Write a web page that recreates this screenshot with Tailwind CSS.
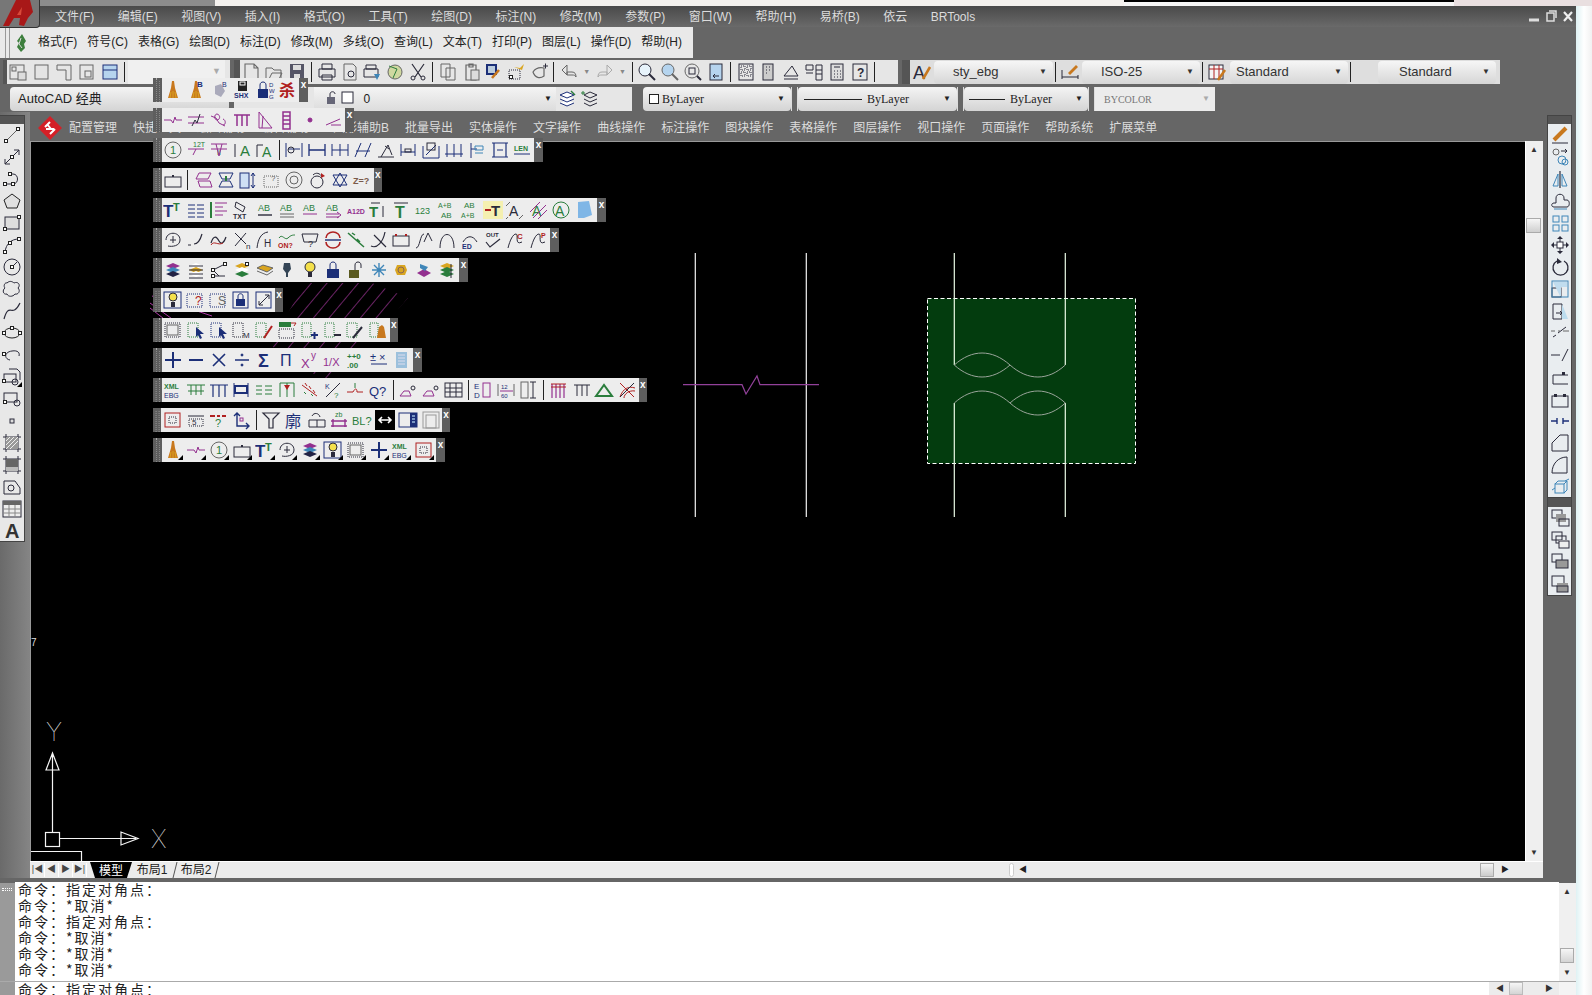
<!DOCTYPE html>
<html lang="zh">
<head>
    <meta charset="UTF-8">
    <title>AutoCAD 经典</title>
    <script src="https://cdn.jsdelivr.net/npm/@tailwindcss/browser@4"></script>
</head>
<body class="bg-white overflow-hidden">
<div class="relative w-[1592px] h-[995px] overflow-hidden flex flex-col font-['Liberation_Sans','Noto_Sans_CJK_SC',sans-serif] text-[12px]">

    <!-- Desktop strip above the window -->
    <div class="flex h-[6px] shrink-0">
        <div class="w-[215px] bg-[#8c8c8c]"></div>
        <div class="w-[909px] bg-[#f4f1ee]"></div>
        <div class="w-[330px] bg-[#f6f6f6] border-t-2 border-black"></div>
        <div class="flex-1 bg-[#e9dfe0]"></div>
    </div>

    <div class="flex flex-1 min-h-0">
        <div class="w-[1576px] flex flex-col bg-[#666666]">

            <!-- Menu bar -->
            <div class="flex items-center h-[21px] shrink-0 pl-[55px] gap-[23.5px] bg-linear-to-b from-[#4a4a4a] to-[#6a6a6a] text-[#dcdcdc] text-[12px] whitespace-nowrap relative">
                <span>文件(F)</span><span>编辑(E)</span><span>视图(V)</span><span>插入(I)</span><span>格式(O)</span><span>工具(T)</span><span>绘图(D)</span><span>标注(N)</span><span>修改(M)</span><span>参数(P)</span><span>窗口(W)</span><span>帮助(H)</span><span>易桥(B)</span><span>依云</span><span>BRTools</span>
                <div class="absolute right-[2px] top-[3px] flex items-center gap-[5px]">
                    <svg width="12" height="14" viewBox="0 0 12 14"><path d="M1 11h10" stroke="#ddd" stroke-width="3"/></svg>
                    <svg width="12" height="14" viewBox="0 0 12 14"><path d="M2 4h7v8H2zM4 2h7v7" fill="none" stroke="#ddd" stroke-width="1.5"/></svg>
                    <svg width="12" height="14" viewBox="0 0 12 14"><path d="M2 3l8 9M10 3l-8 9" stroke="#eee" stroke-width="2.2"/></svg>
                </div>
            </div>

            <!-- Custom menu toolbar -->
            <div class="flex items-center h-[31px] w-[693px] shrink-0 bg-[#e9e9e9] text-[#222] text-[12px] whitespace-nowrap">
                <div class="w-[5px] h-full ml-[5px] shrink-0 border-x border-[#999]"></div>
                <svg class="ml-[4px] mr-[10px] shrink-0" width="14" height="20" viewBox="0 0 14 20"><path d="M8 1L3 8l2 2-2 4 4 5 4-4-1-4 2-3z" fill="#3d7f3d"/><path d="M7 5l-2 6 3 4" stroke="#ddd" fill="none"/></svg>
                <div class="flex gap-[10px] pb-px">
                    <span>格式(F)</span><span>符号(C)</span><span>表格(G)</span><span>绘图(D)</span><span>标注(D)</span><span>修改(M)</span><span>多线(O)</span><span>查询(L)</span><span>文本(T)</span><span>打印(P)</span><span>图层(L)</span><span>操作(D)</span><span>帮助(H)</span>
                </div>
            </div>

            <!-- Standard and styles toolbars -->
            <div class="flex h-[24px] mt-[2px] pl-[3px] shrink-0">
                <div class="flex items-center w-[227px] bg-[#e6e6e6]">
                    <div class="w-[4px] h-full bg-[#555]"></div>
                    <div class="flex" data-icons="wsA,wsB,wsC,wsD,wsE,|"></div>
                    <div class="flex items-center justify-end w-[97px] h-full bg-[#f0f0f0] pr-[4px] text-[#aaa] text-[9px]">▼</div>
                </div>
                <div class="flex items-center w-[664px] ml-[4px] bg-[#e6e6e6]">
                    <div class="w-[6px] h-full bg-[#555]"></div>
                    <div class="flex items-center" data-icons="new,open,save,|,print,preview,plot,globe,cut,|,copy,paste,match,block1,hand,|,undo,dropA,redo,dropB,|,zoomA,zoomB,zoomC,prop,|,calc1,calc2,tri1,calc3,calc4,help,|"></div>
                </div>
                <div class="flex items-center w-[598px] ml-[4px] bg-[#dedede]">
                    <div class="w-[8px] h-full bg-[#555]"></div>
                    <div class="flex w-[24px] justify-center" data-icons="styA"></div>
                    <div class="flex items-center justify-between w-[119px] h-[23px] px-[6px] pl-[19px] rounded-sm bg-linear-to-b from-[#f6f6f6] to-[#d6d6d6] text-[13px] text-[#333]"><span>sty_ebg</span><span class="text-[8px]">▼</span></div>
                    <div class="w-px h-[20px] ml-[2px] mr-[2px] bg-[#222]"></div>
                    <div class="flex w-[24px] justify-center" data-icons="styB"></div>
                    <div class="flex items-center justify-between w-[118px] h-[23px] px-[6px] pl-[19px] rounded-sm bg-linear-to-b from-[#f6f6f6] to-[#d6d6d6] text-[13px] text-[#333]"><span>ISO-25</span><span class="text-[8px]">▼</span></div>
                    <div class="w-px h-[20px] ml-[2px] mr-[2px] bg-[#222]"></div>
                    <div class="flex w-[25px] justify-center" data-icons="styC"></div>
                    <div class="flex items-center justify-between w-[118px] h-[23px] px-[6px] pl-[6px] rounded-sm bg-linear-to-b from-[#f6f6f6] to-[#d6d6d6] text-[13px] text-[#333]"><span>Standard</span><span class="text-[8px]">▼</span></div>
                    <div class="w-px h-[20px] ml-[2px] mr-[27px] bg-[#222]"></div>
                    <div class="flex items-center justify-between w-[118px] h-[23px] px-[6px] pl-[21px] rounded-sm bg-linear-to-b from-[#f6f6f6] to-[#d6d6d6] text-[13px] text-[#333]"><span>Standard</span><span class="text-[8px]">▼</span></div>
                </div>
            </div>

            <!-- Workspace, layer and properties toolbars -->
            <div class="flex items-center h-[24px] mt-[3px] pl-[10px] shrink-0">
                <div class="flex items-center w-[219px] h-full px-[8px] rounded-sm bg-linear-to-b from-[#f4f4f4] to-[#d4d4d4] text-[13px] text-[#222]">AutoCAD 经典</div>
                <div class="flex items-center w-[398px] h-full ml-[5px] pl-[80px] bg-[#e6e6e6]">
                    <div class="flex items-center justify-between w-[242px] h-full pr-[4px] pl-[10px] bg-linear-to-b from-[#f4f4f4] to-[#dcdcdc] text-[#222]">
                        <div class="flex items-center -space-x-[8px]" data-icons="unlockS,squareS"><span class="order-last pl-[10px] text-[12px]">0</span></div>
                        <span class="text-[8px]">▼</span>
                    </div>
                    <div class="flex" data-icons="layA,layB"></div>
                </div>
                <div class="flex items-center justify-between w-[148px] h-full ml-[11px] px-[6px] rounded-sm bg-linear-to-b from-[#f4f4f4] to-[#d4d4d4] font-['Liberation_Serif'] text-[12px] text-[#222]"><span class="flex items-center gap-[3px]"><span class="w-[10px] h-[10px] border border-[#222] bg-white"></span>ByLayer</span><span class="text-[8px]">▼</span></div>
                <div class="w-[7px] h-full border-x border-[#ddd]"></div>
                <div class="flex items-center justify-between w-[159px] h-full px-[6px] rounded-sm bg-linear-to-b from-[#f4f4f4] to-[#d4d4d4] font-['Liberation_Serif'] text-[12px] text-[#222]"><span class="flex items-center gap-[5px]"><span class="w-[58px] h-px bg-[#222]"></span>ByLayer</span><span class="text-[8px]">▼</span></div>
                <div class="w-[7px] h-full border-x border-[#ddd]"></div>
                <div class="flex items-center justify-between w-[124px] h-full px-[5px] rounded-sm bg-linear-to-b from-[#f4f4f4] to-[#d4d4d4] font-['Liberation_Serif'] text-[12px] text-[#222]"><span class="flex items-center gap-[5px]"><span class="w-[36px] h-px bg-[#222]"></span>ByLayer</span><span class="text-[8px]">▼</span></div>
                <div class="w-[7px] h-full border-x border-[#ddd]"></div>
                <div class="flex items-center justify-between w-[120px] h-full pl-[9px] pr-[5px] bg-[#ececec] font-['Liberation_Serif'] text-[10px] text-[#777]"><span>BYCOLOR</span><span class="text-[8px] text-[#aaa]">▼</span></div>
            </div>

            <!-- Work area -->
            <div class="flex flex-1 min-h-0 mt-px">
                <div class="w-[30px] shrink-0 bg-linear-to-r from-[#6a6a6a] to-[#858585] pt-[3px]">
                    <div class="w-[25px] h-[427px] bg-[#e8e8e8] border border-[#444] border-l-0">
                        <div class="h-[8px] bg-[#555]"></div>
                        <div class="flex flex-col items-center" data-col data-icons="line,xline,pline,polygon,rect,arc,circle,cloud,spline,ellipse,ellarc,insert,blockB,point,hatch,grad,region,table,bigA"></div>
                    </div>
                </div>

                <div class="w-[1513px] shrink-0 flex flex-col">
                    <!-- Extended menu -->
                    <div class="flex items-center h-[29px] shrink-0 pt-[2px] text-[#dddddd] whitespace-nowrap">
                        <svg class="ml-[7px] mr-[6px]" width="26" height="26" viewBox="0 0 26 26"><path d="M13 1l12 12-12 12L1 13z" fill="#d42027"/><path d="M8 12l5-5M9 14h8M13 19l5-5M10 9l4 5" stroke="#fff" stroke-width="2" fill="none"/></svg>
                        <div class="flex gap-[16px]">
                            <span>配置管理</span><span>快捷工具</span><span>绘图辅助</span><span class="mr-[8px]">编辑辅助</span><span>图形辅助B</span><span>批量导出</span><span>实体操作</span><span>文字操作</span><span>曲线操作</span><span>标注操作</span><span>图块操作</span><span>表格操作</span><span>图层操作</span><span>视口操作</span><span>页面操作</span><span>帮助系统</span><span>扩展菜单</span>
                        </div>
                    </div>

                    <div class="flex flex-1 min-h-0">
                        <div class="relative flex-1 bg-black border-l border-t border-[#999] overflow-hidden">
                            <svg class="absolute inset-0" width="1494" height="721" viewBox="31 142 1494 721">
                                <defs>
                                    <pattern id="hatch" width="12" height="12" patternUnits="userSpaceOnUse" patternTransform="rotate(40)"><path d="M0 0V12" stroke="#b03aa8" stroke-width="1.2"/></pattern>
                                </defs>
                                <polygon points="270,345 305,283 372,283 408,298 335,378 320,378" fill="url(#hatch)"/>
                                <path d="M150 303l25 18M150 308l18 14M152 296l60 20" stroke="#b03aa8" fill="none"/>

                                <!-- Break symbol between the left pair -->
                                <path d="M695.3 253V517M806.3 253V517" stroke="#f2f2f2" stroke-width="1.2"/>
                                <path d="M683 384.7H742L746 394L757 376L760 384.7H819" stroke="#92419a" fill="none" stroke-width="1.2"/>

                                <!-- Selected pair with window highlight -->
                                <rect x="927.5" y="298.5" width="208" height="165" fill="#033c0e" stroke="#fff" stroke-dasharray="4 2.5"/>
                                <path d="M954.3 253V365M954.3 403V517M1065.3 253V365M1065.3 403V517" stroke="#eafbe6" stroke-width="1.2"/>
                                <path d="M954.3 365C972 349 992 349 1010 365C992 381 972 381 954.3 365ZM1010 365C1028 381 1048 381 1065.3 365" stroke="#9aa59a" fill="none"/>
                                <path d="M954.3 403C972 387 992 387 1010 403C1028 419 1048 419 1065.3 403C1048 387 1028 387 1010 403" stroke="#9aa59a" fill="none"/>

                                <!-- UCS icon -->
                                <g stroke="#f4f4f4" fill="none" stroke-width="1.2">
                                    <rect x="45.5" y="832.5" width="14" height="14"/>
                                    <path d="M52.5 832V770M46 770H59L52.5 753ZM52.5 770V755M60 838.5H121M121 832V845L138 838.5ZM121 838.5H136"/>
                                    <path d="M31 851.5H81.5V863"/>
                                </g>
                                <text x="46" y="741" fill="#eee" font-size="25" font-weight="100" font-family="Inter">Y</text>
                                <text x="151" y="848" fill="#eee" font-size="25" font-weight="100" font-family="Inter">X</text>
                                <text x="31" y="646" fill="#ddd" font-size="10" font-family="Liberation Sans">7</text>
                            </svg>
                        </div>
                        <!-- Vertical scroll bar -->
                        <div class="relative w-[18px] bg-[#efefef] border-l border-white text-[#333]">
                            <span class="absolute left-[4px] top-[3px] text-[8px]">▲</span>
                            <div class="absolute left-0 top-[77px] w-[15px] h-[15px] border border-[#aaa] bg-linear-to-b from-[#f6f6f6] to-[#cfcfcf]"></div>
                            <span class="absolute left-[4px] bottom-[2px] text-[8px]">▼</span>
                        </div>
                    </div>

                    <!-- Layout tabs and horizontal scroll bar -->
                    <div class="flex items-center h-[17px] shrink-0 pl-px bg-[#ececec] text-[#222] whitespace-nowrap border-t border-white">
                        <div class="flex w-[56px] text-[#444] text-[9px] text-center">
                            <span class="w-[14px] border-r border-white">|◀</span><span class="w-[14px] border-r border-white">◀</span><span class="w-[14px] border-r border-white">▶</span><span class="w-[14px] border-r border-white">▶|</span>
                        </div>
                        <div class="ml-[3px] w-[42px] h-full bg-black text-white text-center [clip-path:polygon(0_0,100%_0,88%_100%,12%_100%)]">模型</div>
                        <div class="w-[40px] text-center">布局1</div>
                        <svg width="6" height="16" viewBox="0 0 6 16"><path d="M5 0L1 16" stroke="#555"/></svg>
                        <div class="w-[36px] text-center">布局2</div>
                        <svg width="6" height="16" viewBox="0 0 6 16"><path d="M5 0L1 16" stroke="#555"/></svg>
                        <div class="ml-[789px] w-[5px] h-[14px] bg-white border border-[#ccc] rounded-sm"></div>
                        <span class="ml-[5px] text-[8px]">◀</span>
                        <div class="ml-[453px] w-[14px] h-[14px] border border-[#aaa] bg-linear-to-b from-[#f4f4f4] to-[#cccccc]"></div>
                        <span class="ml-[7px] text-[8px]">▶</span>
                    </div>
                </div>

                <div class="w-[33px] shrink-0 pt-[3px] pl-[4px]">
                    <div class="w-[25px] h-[383px] bg-[#e9edf0] border border-[#444]">
                        <div class="h-[8px] bg-[#555]"></div>
                        <div class="flex flex-col items-center" data-col data-icons="erase,copyC,mirror,offset,array,move,rotate,scale,stretch,trim,extend,breakP,breakG,join,chamfer,fillet,explode"></div>
                    </div>
                    <div class="w-[25px] h-[98px] bg-[#e9edf0] border border-[#444] border-t-0">
                        <div class="h-[9px] bg-[#555]"></div>
                        <div class="flex flex-col items-center" data-col data-icons="ordA,ordB,ordC,ordD"></div>
                    </div>
                </div>
            </div>

            <div class="h-[5px] shrink-0 bg-[#666666]"></div>

            <!-- Command window -->
            <div class="flex h-[98px] shrink-0">
                <div class="w-[15px] bg-[#9a9a9a] pt-[5px] pl-[2px]"><div class="w-[10px] h-[3px] border-y border-dotted border-white"></div></div>
                <div class="w-[1544px] bg-white pl-[3px] -mt-px font-['Noto_Sans_CJK_SC',sans-serif] text-[14px] leading-[15.9px] tracking-[2px] text-[#222] overflow-hidden">
                    <p>命令：指定对角点：</p>
                    <p>命令：*取消*</p>
                    <p>命令：指定对角点：</p>
                    <p>命令：*取消*</p>
                    <p>命令：*取消*</p>
                    <p>命令：*取消*</p>
                </div>
                <div class="relative w-[17px] bg-[#f0f0f0] text-[#333]">
                    <span class="absolute left-[4px] top-[3px] text-[8px]">▲</span>
                    <div class="absolute left-px top-[65px] w-[14px] h-[15px] border border-[#aaa] bg-linear-to-b from-[#f6f6f6] to-[#d4d4d4]"></div>
                    <span class="absolute left-[4px] bottom-[2px] text-[8px]">▼</span>
                </div>
            </div>
            <div class="flex h-[14px] shrink-0 border-t border-[#aaa] bg-white">
                <div class="w-[15px] bg-[#9a9a9a]"></div>
                <div class="w-[1474px] pl-[3px] font-['Noto_Sans_CJK_SC',sans-serif] text-[14px] leading-[15px] tracking-[2px] text-[#222] overflow-hidden">命令：指定对角点：</div>
                <div class="flex items-center w-[70px] bg-[#ececec] text-[#333] text-[8px]">
                    <span class="ml-[7px]">◀</span>
                    <div class="ml-[5px] w-[14px] h-full border border-[#bbb] bg-linear-to-b from-[#f6f6f6] to-[#d4d4d4]"></div>
                    <span class="ml-[22px]">▶</span>
                </div>
                <div class="flex-1 bg-[#f4f4f4]"></div>
            </div>
        </div>
        <div class="flex-1 bg-linear-to-r from-[#dff2f4] via-white to-[#f1f1f1]"></div>
    </div>

    <!-- Application button -->
    <div class="absolute left-0 top-0 w-[40px] h-[28px] bg-[#777] border-r border-b border-[#333] rounded-br-sm overflow-hidden">
        <svg width="40" height="28" viewBox="0 0 40 28"><path d="M3 26L16 0h14l3 12-5 6-4 8-5-1 1-7h-6l-5 8z" fill="#a81818"/><path d="M17 15h4l1-8z" fill="#d84a3a"/></svg>
    </div>

    <!-- Floating toolbars -->
    <div id="floats"></div>
</div>

<script>
    const K = '#2a2a3a', P = '#93308f', N = '#1c2f78', G = '#2a7d3c', Y = '#d9a520', B = '#3f86b8', O = '#c8781e', D = '#666', RD = '#b02020';

    const s = (d, c = K, w = 1) => `<path d="${d}" stroke="${c}" stroke-width="${w}" fill="none"/>`;
    const f = (d, c = K) => `<path d="${d}" fill="${c}"/>`;
    const r = (x, y, w, h, c = K, b = 'none') => `<rect x="${x}" y="${y}" width="${w}" height="${h}" stroke="${c}" fill="${b}"/>`;
    const o = (x, y, a, c = K, b = 'none') => `<circle cx="${x}" cy="${y}" r="${a}" stroke="${c}" fill="${b}"/>`;
    const t = (x, y, str, c = K, z = 8, w = 400) => `<text x="${x}" y="${y}" fill="${c}" font-size="${z}" font-weight="${w}" font-family="Liberation Sans, Noto Sans CJK SC">${str}</text>`;
    const h = (x, y) => `<rect x="${x - 1.5}" y="${y - 1.5}" width="3" height="3" fill="#fff" stroke="#222"/>`;
    const d = (x, y, w, a, c = K) => `<rect x="${x}" y="${y}" width="${w}" height="${a}" stroke="${c}" stroke-dasharray="1 1" fill="none"/>`;
    const broom = f('M9 1h2l1 7 3 10H5l3-10z', O) + s('M8 12l-1 6M10 11v7M12 12l1 6', Y);
    const stack = c => f('M3 6l7-3 7 3-7 3z', c[0]) + f('M3 10l7-3 7 3-7 3z', c[1]) + f('M3 14l7-3 7 3-7 3z', c[2]);
    const iron = s('M2 16h11l-2-5H6z', P) + o(15, 8, 2, K);
    const corner = f('M20 20v-5l-5 5z', '#000');
    const ab = (under) => t(3, 11, 'AB', G, 9) + under;
    const bulb = (c) => o(10, 7, 5, K, c) + f('M8 12h4v5H8z', K);

    const icons = {
        // floating toolbar icons
        broom, broomB: broom + t(11, 7, 'B', N, 8, 700), eraserB: f('M6 6l6-2 4 7-4 6-6-3z', '#aab') + t(13, 7, 'B', N, 7),
        shx: f('M6 1h9v10H6z', '#222') + r(8, 2, 5, 3, '#fff') + t(2, 18, 'SHX', N, 7, 700),
        dwg: f('M3 9h10v9H3z', N) + s('M5 9V5c0-4 6-4 6 0v4', N) + t(14, 7, 'D', N, 6) + t(14, 13, 'W', N, 6) + t(14, 19, 'G', N, 6),
        sha: t(2, 16, '杀', RD, 16, 700),
        brk: s('M1 10h7l2 3 2-6 1 3h6', P), brk2: s('M2 7h16M2 13h16', P) + s('M6 16l3-6 2 3 3-9', K), loop: s('M2 6l5 2 3 5 6 3M8 4c4 1 3 6 0 6s-3-6 0-6M14 9c3 1 3 6 0 6', P),
        comb: s('M2 5h16M5 5v11M10 5v11M15 5v11', P, 1.5), ang: s('M4 2v16h13M4 2l13 16M8 6l-1 12', P), ladder: s('M6 2h7v17H6zM6 6h7M6 10h7M6 14h7', P, 1.5),
        dot: o(10, 10, 2, P, P), slash: s('M3 15l14-6M8 15h10', P),
        circ1: o(10, 10, 8, D) + t(7, 14, '1', G, 11), sec12: t(7, 7, '12T', G, 7) + s('M2 9h16M10 9l-3 6', P), secII: s('M2 4h16M2 9h16', P) + t(8, 15, 'II', G, 7) + s('M7 4l3 12 3-12', P),
        IA: s('M3 4v13', K) + t(8, 16, 'A', G, 15), rA: s('M2 17V5h6', K) + t(7, 17, 'A', G, 14),
        d1: s('M2 3v14M18 3v14M4 9h12', N) + o(7, 10, 3, K), d2: s('M2 4v12M18 4v12M2 10h16', N, 1.3), d3: s('M2 4v12M10 4v12M18 4v12M2 10h16', N), d4: s('M2 17L8 3M12 17l6-14M3 11h14', N),
        d5: s('M2 17h16M5 17l7-12 4 10M9 6l4 3', K), d6: s('M3 4v12M17 4v12M3 12h14', N) + r(7, 9, 6, 3, K), d7: s('M2 18V6M18 18V6M2 18h16M5 15l10-10', N) + r(6, 3, 8, 7, K),
        d8: s('M3 4v13M10 4v13M17 4v13M1 14h18', N), d9: s('M4 3v15M4 9h6', N) + s('M8 6h8v4H8zM8 13h8', B), d10: s('M2 3h16M2 17h16M4 3v14M16 3v14M7 10h6', N, 1.2), len: t(2, 11, 'LEN', G, 7, 700) + s('M2 14h16', N),
        rectTop: r(2, 7, 16, 10) + f('M9 5h2v2H9z'), para: s('M6 3h12l-3 6H3zM5 11h12l2 6H7z', P), para2: s('M3 3h14l-3 6H6zM6 11h8l3 6H3z', N) + s('M10 6v5', G, 2),
        rectH: r(2, 3, 9, 15, N, '#cfe0f5') + s('M15 3v15M13 6l2-3 2 3M13 15l2 3 2-3', N), dashQ: d(3, 6, 14, 11, D) + t(10, 11, '?', D, 8), ring: o(10, 10, 8, D) + o(10, 10, 4, D),
        arcAr: o(10, 12, 6, K) + s('M6 5c3-3 7-2 9 2', K) + f('M14 3l4 3-4 2z', RD), star: s('M3 5h14L10 17zM3 15h14L10 3z', N), zq: t(1, 14, 'Z=?', '#7a5a4a', 9, 700),
        TT: t(0, 17, 'T', N, 17, 700) + t(10, 11, 'T', G, 11, 700), lines: s('M2 5h7M11 5h7M2 9h7M11 9h7M2 13h7M11 13h7M2 17h7M11 17h7', N),
        barlines: s('M2 2v16', G, 2) + s('M6 3h12M6 7h8M6 11h12M6 15h8', P), txtTag: s('M4 2l9 5-2 5-8-5z', K) + t(1, 19, 'TXT', K, 7, 700),
        ab1: ab(s('M3 15h14', K, 1.4)), ab2: ab(s('M3 14h14M3 17h14', D)), ab3: ab(s('M3 14h14', P)), ab4: ab(s('M3 14h13M3 17h13M14 12l4 3-4 3', P)),
        a12d: t(1, 14, 'A12D', P, 7, 700), tud: t(0, 17, 'T', G, 15, 700) + s('M2 3h9M14 6v11', K), tlr: t(4, 18, 'T', G, 16, 700) + s('M3 3h14', K), n123: t(1, 14, '123', G, 9),
        abab1: t(1, 8, 'A+B', G, 7) + t(4, 18, 'AB', G, 8), abab2: t(4, 8, 'AB', G, 8) + t(1, 18, 'A+B', G, 7), yT: f('M0 1h20v18H0z', '#f5f0b0') + t(8, 16, 'T', K, 15, 700) + s('M2 10h6', RD, 2),
        ah1: t(4, 16, 'A', K, 14) + s('M1 6l4-4M14 19l4-4M3 17l-2 2', D), ah2: t(4, 16, 'A', G, 14) + s('M2 12L12 2M5 18L18 5M10 19L19 10', P), ah3: t(4, 16, 'A', G, 14) + o(10, 10, 8, G), sheet: f('M4 2l11-1 3 14-8 3H4z', '#7fb6e6'),
        cloudP: s('M3 10c0-9 14-9 14 0 0 6-8 7-12 6', K) + s('M10 6v7M7 10h6', K), dashC: s('M2 15h3M8 14c3 0 6-3 8-10', K, 1.2), wave: s('M2 13c3-9 6-6 8-2s5 2 7-4', K, 1.2) + s('M2 15c3-5 7 1 12-2', RD),
        xn: s('M3 3l11 11M14 3L3 16', K) + t(14, 19, 'n', K, 8), fH: s('M2 18C3 9 6 3 13 2', K) + t(9, 17, 'H', K, 10), onq: s('M2 8c3-5 6 3 9 0s5-3 7-3', G) + t(1, 18, 'ON?', RD, 7, 700),
        cloudQ: s('M2 4h16l-2 8H4z', K) + t(8, 17, '?', K, 9), refresh: s('M3 8a7 6 0 0 1 14 0M17 12a7 6 0 0 1-14 0', RD, 1.6) + s('M2 10h16', N, 1.4), diag: s('M2 3l16 14M6 3l3 2M11 9l3 3', G, 1.5),
        crossC: s('M2 16c6 3 12-4 14-14M5 5l12 12', K, 1.2), rect2: r(2, 6, 16, 10) + s('M5 6V4M15 6V4', RD, 2), sine: s('M2 18c4 0 4-14 8-14M10 12l4-9 4 8', K), arch: s('M3 18C3 0 17 0 17 18', K), edArc: s('M3 12c4-7 10-7 14 0', K) + t(2, 19, 'ED', N, 7, 700),
        out: t(3, 7, 'OUT', K, 6, 700) + s('M3 12l4 5 10-8', K, 1.2), pc: s('M3 18c2-8 5-14 8-14s-2 12 6 8', K) + t(12, 9, 'C', RD, 8, 700), pp: s('M3 18c2-8 5-14 8-14s-2 12 6 8', K) + t(13, 8, 'P', RD, 7, 700),
        stackA: stack([P, B, '#224']), stackY: stack(['#fff', Y, '#fff']) + s('M3 6h14M3 10h14M3 14h14M3 18h14', K), nodes: s('M4 16h12M4 10l12-6M4 10l6 6', K) + h(4, 10) + h(16, 4) + h(4, 16), stackB: stack([Y, '#fff', G]) + h(15, 4),
        flat: f('M2 8l6-3 10 3-6 4z', Y) + s('M2 11l10 4 6-4M2 8l6-3 10 3-6 4z', D), bulbD: f('M7 3h6l1 6-3 4v4H9v-4L6 9z', '#345'), bulbY: bulb('#f4e04a'), lock: f('M4 9h12v9H4z', N) + s('M7 9V5c0-4 6-4 6 0v4', N),
        unlock: f('M3 10h10v8H3z', '#5a5a20') + s('M9 10V5c0-4 6-4 6 0v3', K), snow: s('M10 3v14M3 10h14M5 5l10 10M15 5L5 15', B, 1.4), sun: f('M6 5h8l2 5-2 5H6l-2-5z', Y) + o(10, 10, 3, '#865'), stackP: f('M3 13l7-4 7 4-7 4z', P) + f('M6 4l8 3-3 4-5-3z', B), stackG: stack([Y, G, G]) + s('M14 4v14', K),
        bulbBox: r(1, 2, 17, 16, N) + bulb('#f4e04a').replace('r="5"', 'r="4"'), dashQ2: d(2, 4, 15, 13, N) + t(10, 15, '?', RD, 12), dashS: d(2, 4, 15, 13, N) + t(10, 15, 'S', D, 12), lockBox: r(2, 2, 15, 16, N) + f('M5 9h9v7H5z', N) + s('M7 9V6c0-3 5-3 5 0v3', N), diagBox: r(2, 2, 15, 16, N) + s('M5 15L15 5M11 5h4v4M5 11v4h4', K),
        dashBox: d(2, 3, 15, 14, K) + r(4, 5, 11, 10, D), vpA: d(2, 3, 10, 14, G) + f('M10 7l8 7-4 0 2 4-2 1-2-4-2 2z', N), vpB: d(2, 3, 10, 14, N) + f('M10 7l8 7-4 0 2 4-2 1-2-4-2 2z', N), vpM: d(2, 3, 10, 14, K) + t(12, 18, 'M', K, 8), vpC: d(2, 3, 10, 14, G) + s('M10 18l8-12', RD, 2), vpD: d(2, 9, 15, 9, K) + f('M2 2h12v5H2z', G) + s('M14 3h5l-2 3', RD),
        vpP: d(2, 3, 9, 14, G) + s('M11 15h7M14.5 12v7', N, 2), vpN: d(2, 3, 9, 14, G) + s('M11 15h7', K, 2), vpE: d(2, 3, 10, 14, G) + s('M8 18l9-11', K, 2), vpF: d(2, 3, 8, 14, G) + f('M14 5l2 2 2 11H9l2-11z', O),
        plus: s('M2 10h16M10 2v16', N, 2), minus: s('M3 10h14', N, 2), times: s('M4 4l12 12M16 4L4 16', N, 1.6), div: s('M3 10h14', N, 1.5) + o(10, 5, 1, N, N) + o(10, 15, 1, N, N), sum: t(3, 17, 'Σ', N, 18, 700), prod: t(3, 16, 'Π', N, 16),
        xy: t(1, 18, 'X', P, 13) + t(11, 9, 'y', P, 10), onex: t(0, 16, '1/X', P, 11), ppz: t(1, 9, '++0', G, 8, 700) + t(1, 18, '.00', G, 8, 700), pmx: t(1, 11, '±', N, 11) + t(10, 11, '×', N, 11) + s('M2 14h16', N), sheetB: f('M5 2h11v16H5z', '#9cc0dc') + s('M7 5h7M7 8h7M7 11h7M7 14h7', '#dde'),
        xml: t(1, 9, 'XML', G, 7, 700) + t(1, 18, 'EBG', N, 7), tA: s('M1 5h18M5 5v10M15 5v10M10 5v10M2 11h16', G), tB: s('M1 5h18M4 5v12M10 5v12M16 5v12', N, 1.2), tC: f('M3 5h14v9H3z', N) + f('M5 7h10v5H5z', '#eee') + s('M3 3v14M17 3v14', N),
        tD: s('M2 6h6M11 6h7M2 10h6M11 10h7M2 14h6M11 14h7', G), tE: s('M3 3h14M3 3v14M17 3v14M10 3v14', G) + f('M7 5l3 5 3-5z', RD), tF: s('M2 5l15 11M5 3l2 3M9 6l2 3M13 10l2 3', RD) + s('M4 12l2 2M11 14l2 2', G), tG: s('M3 17L17 3', K) + t(2, 9, 'K', N, 7) + t(11, 18, '?', G, 8),
        tH: s('M2 12h6c2-4 4-4 4 0h6', RD) + s('M10 3v5', G), qq: t(1, 16, 'Q?', N, 13), iron1: iron, iron2: iron, gridT: r(1, 3, 17, 14, K) + s('M1 8h17M1 12h17M6 3v14M12 3v14', K),
        ed: t(1, 9, 'E', N, 8) + t(1, 18, 'D', N, 8) + r(10, 3, 7, 14, P), frac: s('M2 4v12M18 4v12', D) + t(5, 9, '12', N, 6) + s('M4 11h13', P) + t(5, 18, '60', N, 6), barI: r(2, 2, 7, 16, D) + s('M14 2v16M11 2h6M11 18h6', K), cols: s('M3 4v14M7 4v14M11 4v14M15 4v14', P, 1.2) + s('M2 4h15M2 7h15', RD), tG2: s('M2 5h16M5 5v11M10 5v11M15 5v11', K), triG: s('M2 16L10 5l8 11z', G, 2), xcirc: s('M3 3l14 14M3 17C6 8 12 6 18 8M7 18c0-4 5-8 11-7', RD) + s('M3 17L17 3', K),
        box: r(2, 3, 15, 14, RD) + d(6, 7, 7, 6, K), dots: s('M2 6h16', K) + d(3, 9, 14, 7, K) + t(6, 15, '5', K, 8), qD: s('M2 6h5M9 6h3M14 6h4', RD, 2) + t(7, 17, '?', G, 11), arrows: s('M6 3v13h12M3 6l3-3 3 3M15 13l3 3-3 3', N, 1.4) + r(9, 8, 3, 3, P), funnel: s('M2 3h16l-6 6v9H8V9z', K, 1.2),
        kuo: t(1, 17, '廓', N, 16), house: s('M5 6c2-4 7-3 8 1M2 10h16v7H2zM10 10v7', K), zb: t(6, 7, 'zb', G, 7) + s('M4 9v8M16 9v8M2 11h16M2 16h16', P, 1.4), blq: t(0, 15, 'BL?', G, 11), blackA: f('M0 0h20v20H0z', '#000') + s('M4 10h12M7 7l-3 3 3 3M13 7l3 3-3 3', '#fff', 1.6), blueB: r(1, 3, 18, 14, N) + f('M12 3h7v14h-7z', N) + s('M14 6h3M14 9h3M14 12h3', '#9bd', 1.5), grayF: r(2, 2, 16, 16, '#999') + r(5, 5, 10, 13, '#999'),

        // standard toolbar icons
        wsA: r(2, 3, 14, 14, D) + r(4, 5, 4, 4, D) + r(10, 10, 8, 8, D, '#ddd'), wsB: r(4, 3, 13, 14, D, '#e4e4e4'), wsC: s('M3 3h14v15h-5V8H3z', D), wsD: r(3, 3, 13, 14, D) + r(8, 9, 6, 6, D), wsE: r(3, 3, 14, 14, N, '#b6d4ee') + s('M3 8h14', N),
        new: s('M4 2h9l4 4v12H4zM13 2v4h4', D, 1.1), open: s('M2 6h6l2 2h7v9H2zM5 17l3-6h10l-3 6', D), save: f('M3 2h14v16H3z', '#556') + f('M6 3h8v5H6zM7 12h6v6H7z', '#ddd'),
        print: s('M5 2h10v5H5zM2 7h16v8H2zM5 13h10v5H5z', K), preview: s('M4 2h9l3 3v13H4z', D) + o(11, 12, 3, K), plot: s('M4 3h10v4H4zM2 7h14v8H2z', K) + f('M12 12h6l-3 6z', B), globe: o(10, 10, 7, D, '#cfd8a0') + s('M4 4l8 3-4 9', G), cut: s('M4 2l9 13M16 2L7 15', K, 1.2) + o(5, 16, 2, K) + o(15, 16, 2, K),
        copy: s('M3 2h9v13H3zM8 6h9v12H8z', D), paste: s('M5 3h10v15H5zM8 2h4v3H8z', D, 1.2) + r(10, 8, 8, 10, D, '#ddd'), match: f('M3 2h11v11H3z', N) + f('M5 4h7v7H5z', '#bcd') + s('M16 8l-7 8', O, 2.5), block1: d(3, 8, 11, 9, K) + f('M8 5l6 1 4-4-2 6z', Y) + h(5, 15), hand: s('M4 10c2-3 6-5 11-4v8c-4 3-9 2-11-4z', D, 1.2) + s('M14 4h5M16.5 1.5v5', K),
        undo: s('M8 3L3 8l5 5V10h5c3 0 4 2 4 5-1-2-2-2-4-2H8z', D), dropA: '', redo: s('M12 3l5 5-5 5V10H7c-3 0-4 2-4 5 1-2 2-2 4-2h5z', '#aaa'), dropB: '', zoomA: o(8, 8, 6, K, '#e7f3fb') + s('M12 12l6 6', K, 2), zoomB: o(8, 8, 6, D, '#b5d4ee') + s('M12 12l6 6', D, 2), zoomC: o(9, 9, 7, D) + r(6, 6, 6, 6, K) + s('M14 14l4 4', K, 2), prop: r(4, 2, 12, 16, K, '#b6d4ee') + s('M7 14h6M9 12l-2 2 2 2', K),
        calc1: r(3, 2, 14, 16, K) + d(5, 4, 4, 4, K) + d(11, 4, 4, 4, K) + d(5, 10, 4, 4, K) + d(11, 10, 4, 4, K), calc2: r(5, 2, 10, 16, K, '#ccc') + s('M8 5h1M11 5h1M8 8h1M11 8h1M8 11h1', K), tri1: s('M3 14L11 4l6 10zM3 17h14', K), calc3: s('M2 3h7v5H2zM2 11h7M12 3h6v15h-6zM12 8h6M12 12h6', K), calc4: r(4, 2, 12, 16, K, '#ddd') + s('M7 5h6M7 9h1M10 9h1M13 9h1M7 12h1M10 12h1M13 12h1M7 15h1M10 15h1M13 15h1', K), help: r(3, 2, 14, 16, K) + t(7, 15, '?', K, 12, 700),
        styA: t(1, 17, 'A', K, 18) + s('M18 5l-7 12', O, 2.5), styB: s('M2 8v9M18 13v4M2 15h16', K) + f('M8 11l8-8 2 2-8 8z', O), styC: r(2, 3, 14, 14, K, '#f5f5f5') + s('M2 7h14M7 3v14M12 3v14', RD) + s('M18 8l-7 10', O, 2.5),
        unlockS: f('M2 8h8v7H2z', '#667') + s('M5 8V5c0-3 5-3 5 0', K), squareS: r(2, 3, 11, 11, K, '#fff'), layA: stack(['#fff', '#fff', '#fff']) + s('M3 6l7-3 7 3-7 3zM3 10l7 3 7-3M3 14l7 3 7-3', N) + s('M14 2l4 4', G, 1.5), layB: s('M4 6l6-3 7 3-7 3zM4 10l6 3 7-3M4 14l6 3 7-3', K) + s('M3 2v4M1 4h4', G),

        // draw toolbar
        line: s('M4 16L16 4', D) + h(4, 16) + h(16, 4), xline: s('M3 17L17 3M12 3h5v5M3 12v5h5', K) + h(10, 10), pline: s('M3 15h8c6 0 6-10 0-10H8', K) + h(3, 15) + h(11, 15) + h(8, 5), polygon: `<path d="M10 3l8 6-3 8H5L2 9z" fill="#e0e0e0" stroke="#222"/>`,
        rect: r(3, 4, 14, 12, K, '#ddd') + h(3, 16) + h(17, 4), arc: s('M3 17C4 9 9 4 17 4', K) + h(3, 17) + h(8, 8) + h(17, 4), circle: o(10, 10, 8, K) + s('M10 10l5-5', K) + h(10, 10), cloud: s('M5 4c3-3 6-1 7 0 4-2 7 2 4 5 3 3 0 7-3 6-2 3-7 3-8 0-4 1-5-4-2-6-2-2 0-6 2-5z', K),
        spline: s('M2 18C7 0 10 18 18 2', K, 1.2), ellipse: `<ellipse cx="10" cy="10" rx="8" ry="5" fill="none" stroke="#222"/>` + h(2, 10) + h(18, 10) + h(10, 5), ellarc: s('M8 15C2 14 2 7 10 6c6-1 8 2 7 5', K) + h(2, 9), insert: s('M7 2h8l3 3v8', K) + r(2, 7, 12, 8, K) + o(13, 15, 3, K) + corner + h(2, 14), blockB: r(2, 4, 13, 9, K) + o(15, 14, 3, K) + h(3, 13), point: r(8, 8, 4, 4, K, '#ddd'),
        hatch: s('M1 4h18M1 16h18M4 1v18M16 1v18', K) + f('M4 4h12v12H4z', '#999') + s('M4 8l4-4M4 12l8-8M4 16L16 4M8 16l8-8', '#eee'), grad: s('M1 4h18M1 16h18M4 1v18M16 1v18', K) + f('M4 4h12v8H4z', '#666') + f('M4 12h12v4H4z', '#bbb'), region: s('M2 4h11l5 7v6H2z', K) + o(9, 11, 3, K), table: r(1, 2, 18, 16, K, '#eee') + f('M1 2h18v4H1z', '#666') + s('M1 10h18M1 14h18M7 6v12M13 6v12', '#888'), bigA: t(3, 17, 'A', '#333', 20, 700),

        // modify toolbar
        erase: s('M4 15L16 3', O, 4) + s('M2 18h16', K), copyC: o(6, 5, 3, D) + o(12, 13, 4, B) + o(15, 15, 3, B) + s('M11 4h6M15 2l2 2-2 2', K), mirror: s('M10 2v17', K, 1.2) + s('M8 5L3 17h5zM12 5l5 12h-5z', B), offset: s('M6 12V7c0-5 8-5 8 0v2h3c3 0 3 7 0 7H4c-3 0-3-4 0-4z', K) + s('M4 18h13', B), array: r(3, 3, 6, 6, B) + r(12, 3, 6, 6, B) + r(3, 12, 6, 6, B) + r(12, 12, 6, 6, B),
        move: s('M10 2v16M2 10h16', K) + f('M10 1l3 3H7zM10 19l3-3H7zM1 10l3-3v6zM19 10l-3-3v6z', K) + r(7, 7, 6, 6, K, '#fff'), rotate: s('M14 4a7.5 7.5 0 1 1-7 0', K, 1.3) + f('M7 1l5 4-5 2z', K), scale: r(2, 9, 9, 9, K) + r(2, 2, 16, 16, B) + f('M3 3h14v5h-6v9h-1z', '#c0dcee'), stretch: s('M3 3h9v15H3z', K) + f('M12 3l6 15h-6z', '#bcdcee') + s('M6 12h6M10 10l2 2-2 2', K),
        trim: s('M3 14l3-2M8 10l8-6', K) + s('M1 8h4M8 8h2M13 8h6', D, 1) , extend: s('M1 10h9', K) + s('M12 16l6-12', K) , breakP: s('M3 8h15M3 17h15M3 8v9', K) + f('M12 5h3v3h-3z', K), breakG: r(2, 7, 16, 11, K) + f('M4 5h3v3H4zM13 5h3v3h-3z', K), join: s('M1 10h6M13 10h6M7 7v6M13 7v6', N, 1.4), chamfer: s('M2 18h16V2H10L2 10z', K), fillet: s('M2 18C2 9 8 2 17 2v16z', K), explode: r(5, 7, 9, 9, B) + s('M5 7l3-3h9l-3 3M14 16l3-3V4M2 13l3-2M15 4l4-2', B),
        ordA: r(2, 2, 10, 8, K) + f('M6 6h10v8H6z', '#999') + r(9, 11, 10, 7, K), ordB: r(2, 2, 10, 8, K) + r(6, 6, 10, 7, K) + f('M9 10h10v8H9z', '#eee') + r(9, 11, 10, 7, K), ordC: r(2, 2, 10, 8, K) + f('M6 8h12v8H6z', '#999') + r(6, 8, 12, 8, K), ordD: r(2, 2, 12, 10, K) + f('M7 9h11v9H7z', '#999') + r(7, 12, 11, 6, K),
    };

    const cell = (name, tall) => {
        if (name === '|') return '<div class="w-px h-[20px] mx-[3px] self-center bg-[#222]"></div>';
        const arrow = name === 'dropA' || name === 'dropB';
        if (arrow) return '<div class="flex items-center justify-center w-[13px] text-[7px] text-[#888]">▼</div>';
        const size = tall ? 'w-[23px] h-[22px]' : 'w-[22.8px] h-[24px]';
        return `<div class="flex items-center justify-center ${size}"><svg width="20" height="20" viewBox="0 0 20 20">${icons[name] || ''}</svg></div>`;
    };

    document.querySelectorAll('[data-icons]').forEach(el => {
        const html = el.dataset.icons.split(',').map(n => cell(n, 'col' in el.dataset)).join('');
        el.insertAdjacentHTML('afterbegin', html);
    });

    const floats = [
        ['top-[78px] w-[155px]', 'broom,broomB,eraserB,shx,dwg,sha'],
        ['top-[108px] w-[201px]', 'brk,brk2,loop,comb,ang,ladder,dot,slash'],
        ['top-[138px] w-[390px]', 'circ1,sec12,secII,IA,rA,|,d1,d2,d3,d4,d5,d6,d7,d8,d9,d10,len'],
        ['top-[168px] w-[229px]', 'rectTop,|,para,para2,rectH,dashQ,ring,arcAr,star,zq'],
        ['top-[198px] w-[453px]', 'TT,lines,barlines,txtTag,ab1,ab2,ab3,ab4,a12d,tud,tlr,n123,abab1,abab2,yT,ah1,ah2,ah3,sheet'],
        ['top-[228px] w-[406px]', 'cloudP,dashC,wave,xn,fH,onq,cloudQ,refresh,diag,crossC,rect2,sine,arch,edArc,out,pc,pp'],
        ['top-[258px] w-[315px]', 'stackA,stackY,nodes,stackB,flat,bulbD,bulbY,lock,unlock,snow,sun,stackP,stackG'],
        ['top-[288px] w-[130px]', 'bulbBox,dashQ2,dashS,lockBox,diagBox'],
        ['top-[318px] w-[245px]', 'dashBox,vpA,vpB,vpM,vpC,vpD,vpP,vpN,vpE,vpF'],
        ['top-[348px] w-[269px]', 'plus,minus,times,div,sum,prod,xy,onex,ppz,pmx,sheetB'],
        ['top-[378px] w-[494px]', 'xml,tA,tB,tC,tD,tE,tF,tG,tH,qq,|,iron1,iron2,gridT,|,ed,frac,barI,|,cols,tG2,triG,xcirc'],
        ['top-[408px] w-[297px]', 'box,dots,qD,arrows,|,funnel,kuo,house,zb,blq,blackA,blueB,grayF'],
        ['top-[438px] w-[292px]', 'broom*,brk*,circ1*,rectTop*,TT*,cloudP*,stackA*,bulbBox*,dashBox*,plus*,xml*,box*'],
    ];

    document.getElementById('floats').innerHTML = floats.map(([cls, list]) => {
        const cells = list.split(',').map(n => {
            if (!n.endsWith('*')) return cell(n);
            const base = n.slice(0, -1);
            icons[n] = icons[base] + corner;
            return cell(n);
        }).join('');
        return `<div class="absolute left-[153px] ${cls} h-[24px] flex bg-[#5e5e5e]">
            <div class="w-[8px] h-full ml-px border-x border-dotted border-[#aaa] scale-x-50"></div>
            <div class="flex flex-1 bg-[#ededed]">${cells}</div>
            <div class="w-[9px] text-center text-white text-[10px] leading-[13px] font-bold">x</div>
        </div>`;
    }).join('');
</script>
</body>
</html>
